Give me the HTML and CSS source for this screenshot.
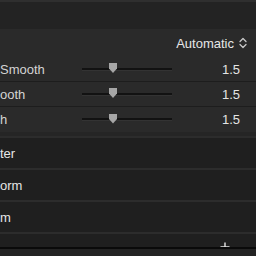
FILE: index.html
```html
<!DOCTYPE html>
<html lang="en">
<head>
    <meta charset="UTF-8">
    <meta name="viewport" content="width=device-width, initial-scale=1.0">
    <title>Inspector</title>
    <link rel="stylesheet" href="styles.css">
</head>
<body>
    <div class="topbar"></div>

    <div class="params">
        <div class="param-head">
            <span class="mode">Automatic</span>
            <svg class="stepper" width="8" height="12" viewBox="0 0 8 12">
                <path d="M1 4.5 L4 1.5 L7 4.5 M1 7.5 L4 10.5 L7 7.5" fill="none" stroke="#c8c8c8" stroke-width="1.3" stroke-linecap="round" stroke-linejoin="round"/>
            </svg>
        </div>
        <div class="param-row">
            <span class="label">Smooth</span>
            <div class="slider"><div class="track"></div><div class="thumb"></div></div>
            <span class="value">1.5</span>
        </div>
        <div class="param-row">
            <span class="label">ooth</span>
            <div class="slider"><div class="track"></div><div class="thumb"></div></div>
            <span class="value">1.5</span>
        </div>
        <div class="param-row last">
            <span class="label">h</span>
            <div class="slider"><div class="track"></div><div class="thumb"></div></div>
            <span class="value">1.5</span>
        </div>
    </div>

    <div class="spacer"></div>

    <div class="list">
        <div class="list-row"><span class="name">ter</span></div>
        <div class="list-row"><span class="name">orm</span></div>
        <div class="list-row"><span class="name">m</span></div>
        <div class="list-row add-row">
            <svg class="add" width="10" height="10" viewBox="0 0 10 10">
                <path d="M5 0.5 V9.5 M0.5 5 H9.5" stroke="#e6e6e6" stroke-width="1.4"/>
            </svg>
        </div>
    </div>

    <div class="bottombar"></div>
</body>
</html>
```

FILE: styles.css
```css
body {
    margin: 0;
    background: #1f1f1f;
    font-family: "Liberation Sans", Arial, sans-serif;
    font-size: 13px;
    overflow: hidden;
    height: 256px;
}

.topbar {
    height: 27px;
    border-top: 2px solid #2f2f2f;
    background: #232323;
}

.params {
    background: #2a2a2a;
}

.param-head {
    height: 28px;
    display: flex;
    align-items: center;
    justify-content: flex-end;
    padding-right: 9px;
    color: #e6e6e6;
}

.stepper {
    margin-left: 5px;
}

.param-row {
    height: 24px;
    display: flex;
    align-items: center;
    border-bottom: 1px solid #1d1d1d;
}

.param-row.last {
    height: 25px;
    border-bottom: none;
}

.label {
    flex: 0 0 82px;
    color: #d4d4d4;
}

.slider {
    flex: 0 0 90px;
    height: 12px;
    position: relative;
    display: flex;
    align-items: center;
}

.track {
    width: 100%;
    height: 2px;
    background: #121212;
    border-bottom: 1px solid #333;
}

.thumb {
    position: absolute;
    left: 27px;
    top: 0;
    width: 8px;
    height: 10px;
    background: #a6a6a6;
    clip-path: polygon(0 0, 100% 0, 100% 55%, 50% 100%, 0 55%);
}

.value {
    flex: 1;
    text-align: right;
    padding-right: 16px;
    color: #e4e4e4;
}

.spacer {
    height: 4px;
    background: #252525;
}

.list-row {
    height: 30px;
    border-top: 2px solid #2c2c2c;
    display: flex;
    align-items: center;
    background: #1f1f1f;
}

.name {
    color: #e6e6e6;
}

.add-row {
    height: 13px;
    overflow: hidden;
    align-items: flex-end;
    justify-content: flex-end;
    padding-right: 26px;
}

.add {
    margin-bottom: -5px;
}

.bottombar {
    height: 7px;
    border-top: 2px solid #0a0a0a;
    background: #232323;
}
```
